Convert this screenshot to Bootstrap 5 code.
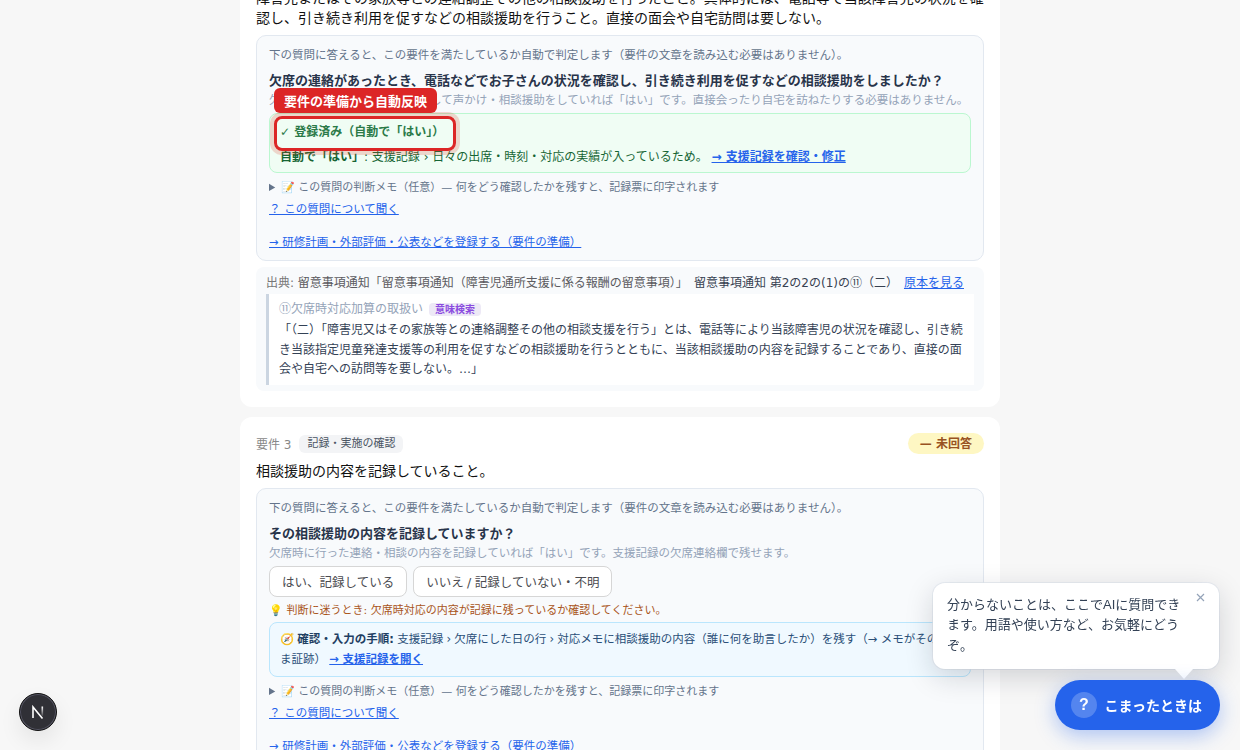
<!DOCTYPE html>
<html lang="ja">
<head>
<meta charset="utf-8">
<meta name="viewport" content="width=device-width, initial-scale=1">
<title>要件チェック</title>
<link href="https://cdn.jsdelivr.net/npm/bootstrap@5.3.0/dist/css/bootstrap.min.css" rel="stylesheet">
<style>
body{height:750px;overflow:hidden;background:#f7f7f7;color:#111;font-family:"DejaVu Sans","Noto Sans CJK JP",sans-serif;font-size:14px}
a{color:#2563eb}
.page{width:760px}
.req{border-radius:12px;padding:16px}
.req-first{margin-top:-28px}
.req + .req{margin-top:10px}
.req-title{font-size:14px;line-height:20px;margin-bottom:7px}
.req-head{height:21px;margin-bottom:7px}
.req-no{font-size:12px;color:#888;padding-top:2px}
.ask{background:#f8fafc;border:1px solid #e2e8f0;border-radius:10px;padding:11px 12px 9px}
.t-help{font-size:11.5px;line-height:17px;color:#64748b}
.t-q{font-size:13px;line-height:20px;font-weight:700;color:#28344a;margin:7px 0 1px}
.t-sub{font-size:11.5px;line-height:17px;color:#94a3b8;white-space:nowrap}
.auto{background:#f0fdf4;border:1px solid #bbf7d0;border-radius:8px;height:60px;margin-top:4px;padding:8px 10px 0;color:#166534;font-size:12px;line-height:20px}
.auto-state{height:25px;width:max-content;color:#2b7a48;font-weight:700}
.ring{position:absolute;left:-6px;top:-6px;width:182px;height:35px;border:3px solid #dc2626;border-radius:8px;box-shadow:0 0 0 4px rgba(220,60,38,.2)}
.ring-tag{position:absolute;left:-6px;top:-34px;height:25px;border-radius:6px;background:#dc2626;color:#fff;font-size:13px;line-height:28px;padding:0 10px;font-weight:700;white-space:nowrap}
.memo{font-size:11px;line-height:17px;color:#64748b;margin-top:6px}
.t-link{font-size:11.5px;line-height:17px;margin-top:5px}
.src{background:#f8fafc;border-radius:8px;margin-top:6px;padding:6px 10px;height:124px;font-size:12px;line-height:20px;color:#777;white-space:nowrap}
.src-line{gap:6px}
.src-doc{color:#5b5b60}
.src-ref{color:#374151}
.quote{background:#fff;border-left:3px solid #cbd5e1;margin-top:1px;height:91px;padding:5px 10px;color:#334155;line-height:19.5px;white-space:normal}
.quote-head{color:#94a3b8;line-height:20px;margin-bottom:2px}
.sem{background:#ede9f6;color:#8b4be0;font-size:10px;line-height:13px;font-weight:700;border-radius:4px;padding:0 6px;margin-left:6px}
.kind{background:#f3f4f6;color:#4b5563;font-size:11px;line-height:18px;border-radius:6px;padding:0 8px}
.state{background:#fef7c3;color:#985222;font-size:12px;font-weight:700;line-height:19px;border-radius:99px;padding:2px 12px 0}
.answers{gap:6px}
.ans{--bs-btn-font-size:12.5px;--bs-btn-line-height:19px;--bs-btn-padding-x:12px;--bs-btn-border-radius:8px;--bs-btn-bg:#fff;--bs-btn-border-color:#d6d6d6;--bs-btn-color:#4b4b50;padding-top:6px;padding-bottom:4px;word-spacing:-.5px}
.hint{font-size:11px;line-height:17px;color:#a8541a;padding-top:5px;margin-bottom:-1px}
.steps{background:#f0f9ff;border:1px solid #bae6fd;border-radius:8px;height:55px;margin-top:4px;padding:6px 10px;color:#2a4f78;font-size:11.5px;line-height:20.3px;word-spacing:-.4px}
.steps b{color:#1f3f63}
.chat{right:21px;bottom:81px;width:286px;height:86px;border-radius:12px;background:#fff;padding:11.5px 34px 0 14px;font-family:"Liberation Sans","Noto Sans CJK JP",sans-serif;font-size:13px;line-height:20.8px;color:#334155;box-shadow:0 8px 28px rgba(15,23,42,.17),0 0 0 1px rgba(226,232,240,.7)}
.chat::after{content:"";position:absolute;right:26px;bottom:-10px;border:9px solid transparent;border-top:10px solid #fff;border-bottom:0}
.chat-x{position:absolute;right:14px;top:10px}
.fab{right:20px;bottom:20px;width:165px;height:50px;border-radius:25px;background:#2563eb;color:#fff;font-family:"Liberation Sans","Noto Sans CJK JP",sans-serif;font-size:14px;font-weight:700;gap:7.5px;padding-left:16px;box-shadow:0 6px 20px rgba(37,99,235,.35)}
.fab-q{width:26px;height:26px;border-radius:50%;background:rgba(255,255,255,.22);font-size:16px}
.fab-label{padding-top:3px}
.dev{left:19px;bottom:19px;width:38px;height:38px;border-radius:50%;background:#303036;border:1px solid #111;box-shadow:inset 0 0 0 1px #555564,0 10px 22px rgba(0,0,0,.08)}
</style>
</head>
<body>
<main class="page mx-auto">
  <section class="req req-first bg-white">
    <div class="req-title">障害児またはその家族等との連絡調整その他の相談援助を行ったこと。具体的には、電話等で当該障害児の状況を確認し、引き続き利用を促すなどの相談援助を行うこと。直接の面会や自宅訪問は要しない。</div>
    <div class="ask">
      <div class="t-help">下の質問に答えると、この要件を満たしているか自動で判定します（要件の文章を読み込む必要はありません）。</div>
      <div class="t-q">欠席の連絡があったとき、電話などでお子さんの状況を確認し、引き続き利用を促すなどの相談援助をしましたか？</div>
      <div class="t-sub">欠席連絡を受けた時保護者に対して声かけ・相談援助をしていれば「はい」です。直接会ったり自宅を訪ねたりする必要はありません。</div>
      <div class="auto">
        <div class="auto-state position-relative">✓ 登録済み（自動で「はい」）<span class="ring"></span><span class="ring-tag">要件の準備から自動反映</span></div>
        <div><b>自動で「はい」</b>: 支援記録 › 日々の出席・時刻・対応の実績が入っているため。 <a class="fw-bold" href="#">→ 支援記録を確認・修正</a></div>
      </div>
      <details class="memo"><summary>📝 この質問の判断メモ（任意）— 何をどう確認したかを残すと、記録票に印字されます</summary></details>
      <div class="t-link"><a href="#">？ この質問について聞く</a></div>
      <div class="t-link mt-3"><a href="#">→ 研修計画・外部評価・公表などを登録する（要件の準備）</a></div>
    </div>
    <div class="src">
      <div class="src-line d-flex"><span>出典: <span class="src-doc">留意事項通知「留意事項通知（障害児通所支援に係る報酬の留意事項）」</span></span><span class="src-ref">留意事項通知 第2の2の(1)の⑪（二）</span><a href="#">原本を見る</a></div>
      <div class="quote">
        <div class="quote-head d-flex align-items-center">⑪欠席時対応加算の取扱い<span class="sem">意味検索</span></div>
        「（二）「障害児又はその家族等との連絡調整その他の相談支援を行う」とは、電話等により当該障害児の状況を確認し、引き続き当該指定児童発達支援等の利用を促すなどの相談援助を行うとともに、当該相談援助の内容を記録することであり、直接の面会や自宅への訪問等を要しない。…」
      </div>
    </div>
  </section>

  <section class="req bg-white">
    <div class="req-head d-flex align-items-center gap-2"><span class="req-no">要件 3</span><span class="kind">記録・実施の確認</span><span class="state ms-auto">— 未回答</span></div>
    <div class="req-title">相談援助の内容を記録していること。</div>
    <div class="ask">
      <div class="t-help">下の質問に答えると、この要件を満たしているか自動で判定します（要件の文章を読み込む必要はありません）。</div>
      <div class="t-q">その相談援助の内容を記録していますか？</div>
      <div class="t-sub">欠席時に行った連絡・相談の内容を記録していれば「はい」です。支援記録の欠席連絡欄で残せます。</div>
      <div class="answers d-flex mt-1"><button class="btn ans">はい、記録している</button><button class="btn ans">いいえ / 記録していない・不明</button></div>
      <div class="hint">💡 判断に迷うとき: 欠席時対応の内容が記録に残っているか確認してください。</div>
      <div class="steps">🧭 <b>確認・入力の手順:</b> 支援記録 › 欠席にした日の行 › 対応メモに相談援助の内容（誰に何を助言したか）を残す（→ メモがそのまま証跡） <a class="fw-bold" href="#">→ 支援記録を開く</a></div>
      <details class="memo"><summary>📝 この質問の判断メモ（任意）— 何をどう確認したかを残すと、記録票に印字されます</summary></details>
      <div class="t-link"><a href="#">？ この質問について聞く</a></div>
      <div class="t-link mt-3"><a href="#">→ 研修計画・外部評価・公表などを登録する（要件の準備）</a></div>
    </div>
  </section>
</main>

<div class="chat position-fixed">分からないことは、ここでAIに質問できます。用語や使い方など、お気軽にどうぞ。
  <svg class="chat-x" width="9" height="9" viewBox="0 0 9 9" stroke="#94a3b8" stroke-width="1.2"><path d="M1 1l7 7M8 1L1 8"/></svg>
</div>
<div class="fab position-fixed d-flex align-items-center"><span class="fab-q d-flex align-items-center justify-content-center">?</span><span class="fab-label">こまったときは</span></div>
<div class="dev position-fixed d-flex align-items-center justify-content-center">
  <svg width="14" height="14" viewBox="0 0 14 14" fill="none" stroke-width="1.6">
    <defs><linearGradient id="fade" x1="0" y1="0" x2="0" y2="1"><stop offset="0" stop-color="#fff"/><stop offset="1" stop-color="#fff" stop-opacity=".1"/></linearGradient></defs>
    <path d="M2 13V2L11.5 13.5" stroke="#fff"/><rect x="10.5" y="1.5" width="1.6" height="9.5" fill="url(#fade)"/>
  </svg>
</div>
<script src="https://cdn.jsdelivr.net/npm/bootstrap@5.3.0/dist/js/bootstrap.bundle.min.js"></script>
</body>
</html>
